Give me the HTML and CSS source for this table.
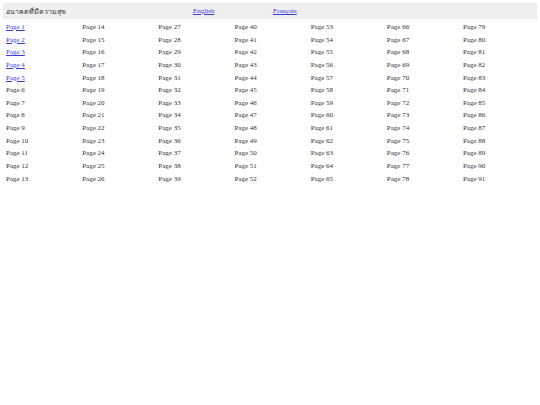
FILE: index.html
```html
<!DOCTYPE html>
<html lang="th">
<head>
<meta charset="utf-8">
<title>อนาคตที่มีความสุข</title>
<link rel="stylesheet" href="styles.css">
</head>
<body>
<div class="header">
  <span class="title">อนาคตที่มีความสุข</span>
  <a class="lang en" href="#">English</a>
  <a class="lang fr" href="#">Français</a>
</div>
<div class="grid">
<a href="#">Page 1</a><span>Page 14</span><span>Page 27</span><span>Page 40</span><span>Page 53</span><span>Page 66</span><span>Page 79</span>
<a href="#">Page 2</a><span>Page 15</span><span>Page 28</span><span>Page 41</span><span>Page 54</span><span>Page 67</span><span>Page 80</span>
<a href="#">Page 3</a><span>Page 16</span><span>Page 29</span><span>Page 42</span><span>Page 55</span><span>Page 68</span><span>Page 81</span>
<a href="#">Page 4</a><span>Page 17</span><span>Page 30</span><span>Page 43</span><span>Page 56</span><span>Page 69</span><span>Page 82</span>
<a href="#">Page 5</a><span>Page 18</span><span>Page 31</span><span>Page 44</span><span>Page 57</span><span>Page 70</span><span>Page 83</span>
<span>Page 6</span><span>Page 19</span><span>Page 32</span><span>Page 45</span><span>Page 58</span><span>Page 71</span><span>Page 84</span>
<span>Page 7</span><span>Page 20</span><span>Page 33</span><span>Page 46</span><span>Page 59</span><span>Page 72</span><span>Page 85</span>
<span>Page 8</span><span>Page 21</span><span>Page 34</span><span>Page 47</span><span>Page 60</span><span>Page 73</span><span>Page 86</span>
<span>Page 9</span><span>Page 22</span><span>Page 35</span><span>Page 48</span><span>Page 61</span><span>Page 74</span><span>Page 87</span>
<span>Page 10</span><span>Page 23</span><span>Page 36</span><span>Page 49</span><span>Page 62</span><span>Page 75</span><span>Page 88</span>
<span>Page 11</span><span>Page 24</span><span>Page 37</span><span>Page 50</span><span>Page 63</span><span>Page 76</span><span>Page 89</span>
<span>Page 12</span><span>Page 25</span><span>Page 38</span><span>Page 51</span><span>Page 64</span><span>Page 77</span><span>Page 90</span>
<span>Page 13</span><span>Page 26</span><span>Page 39</span><span>Page 52</span><span>Page 65</span><span>Page 78</span><span>Page 91</span>
</div>
</body>
</html>
```
FILE: styles.css
```css
html, body {
  margin: 0;
  padding: 0;
  background: #fff;
}
body {
  padding: 3px;
  font-family: "Liberation Serif", "Times New Roman", serif;
  font-size: 7px;
  color: #333;
}
.header {
  display: flex;
  align-items: center;
  height: 16px;
  padding: 0 3px;
  background: #efefef;
}
.title {
  font-family: "Noto Sans", "DejaVu Sans", sans-serif;
  font-size: 7px;
  width: 187px;
}
.lang {
  color: #3a3ae0;
  text-decoration: underline;
}
.en {
  width: 80px;
}
.grid {
  display: grid;
  grid-template-columns: repeat(7, 76.17px);
  grid-auto-rows: 12.65px;
  padding: 2px 0 0 3px;
  line-height: 12.65px;
}
.grid a {
  color: #3a3ae0;
  text-decoration: underline;
}
```
